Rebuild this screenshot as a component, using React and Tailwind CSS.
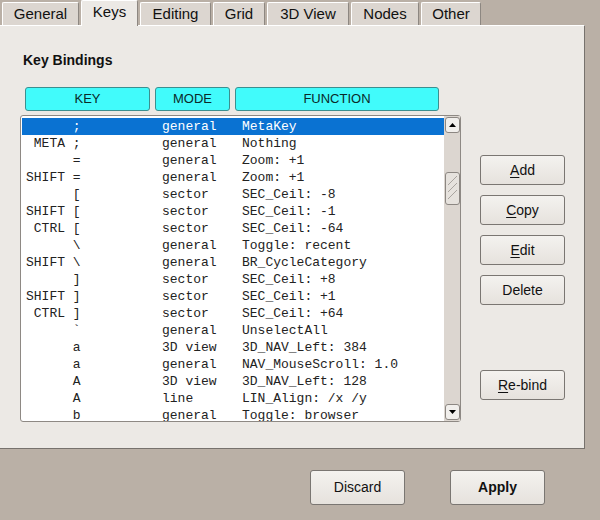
import React from 'react';

const tabs = [
  { label: 'General', w: 'w-[77px]' },
  { label: 'Keys', w: 'w-[57px]', active: true },
  { label: 'Editing', w: 'w-[71px]' },
  { label: 'Grid', w: 'w-[52px]' },
  { label: '3D View', w: 'w-[82px]' },
  { label: 'Nodes', w: 'w-[68px]' },
  { label: 'Other', w: 'w-[60px]' },
];

const rows = [
  ['      ;', 'general', 'MetaKey'],
  [' META ;', 'general', 'Nothing'],
  ['      =', 'general', 'Zoom: +1'],
  ['SHIFT =', 'general', 'Zoom: +1'],
  ['      [', 'sector', 'SEC_Ceil: -8'],
  ['SHIFT [', 'sector', 'SEC_Ceil: -1'],
  [' CTRL [', 'sector', 'SEC_Ceil: -64'],
  ['      \\', 'general', 'Toggle: recent'],
  ['SHIFT \\', 'general', 'BR_CycleCategory'],
  ['      ]', 'sector', 'SEC_Ceil: +8'],
  ['SHIFT ]', 'sector', 'SEC_Ceil: +1'],
  [' CTRL ]', 'sector', 'SEC_Ceil: +64'],
  ['      `', 'general', 'UnselectAll'],
  ['      a', '3D view', '3D_NAV_Left: 384'],
  ['      a', 'general', 'NAV_MouseScroll: 1.0'],
  ['      A', '3D view', '3D_NAV_Left: 128'],
  ['      A', 'line', 'LIN_Align: /x /y'],
  ['      b', 'general', 'Toggle: browser'],
];

const sans = "font-['Liberation_Sans',Arial,sans-serif]";

function Btn({ children, className = '' }) {
  return (
    <button
      className={`flex items-center justify-center rounded-[3px] border border-[#7a7672] bg-gradient-to-b from-[#f4f2ef] to-[#e6e2dd] text-[14px] text-[#111] ${className}`}
    >
      {children}
    </button>
  );
}

function Ul({ c, rest }) {
  return (
    <span>
      <span className="underline underline-offset-2">{c}</span>
      {rest}
    </span>
  );
}

function ScrollBtn({ up }) {
  return (
    <div className="flex h-[16px] w-[15px] items-center justify-center rounded-[3px] border border-[#8c8782] bg-[#f1efec]">
      <svg width="7" height="4" viewBox="0 0 7 4">
        {up ? <path d="M0 4 L3.5 0 L7 4 Z" fill="#000" /> : <path d="M0 0 L3.5 4 L7 0 Z" fill="#000" />}
      </svg>
    </div>
  );
}

export default function App() {
  return (
    <div className={`flex h-[520px] w-[600px] flex-col bg-[#bab0a6] ${sans}`}>
      <div className="flex h-[25px] items-end gap-[2px] pl-[2px]">
        {tabs.map(t => (
          <div
            key={t.label}
            className={`${t.w} flex items-center justify-center rounded-t-[2px] border-l border-t border-r border-l-white border-t-white border-r-[#8d8781] text-[15px] text-[#111] ${
              t.active ? 'relative z-10 -mb-[1px] h-[26px] bg-[#ece9e5] pb-[2px]' : 'h-[23px] bg-[#dcd6d0]'
            }`}
          >
            {t.label}
          </div>
        ))}
      </div>

      <div className="flex h-[424px] w-[585px] flex-col border-r border-b border-r-[#77726d] border-b-[#77726d] border-t border-t-white bg-[#ece9e5]">
        <div className="pl-[23px] pt-[24px] text-[14px] font-bold text-[#111]">Key Bindings</div>

        <div className="mt-[16px] flex">
          <div className="ml-[20px] flex w-[441px] flex-col">
            <div className="ml-[5px] flex h-[24px] gap-[5px]">
              {[['KEY', 'w-[125px]'], ['MODE', 'w-[75px]'], ['FUNCTION', 'w-[204px]']].map(([l, w]) => (
                <div
                  key={l}
                  className={`${w} flex items-center justify-center rounded-[3px] border border-[#3b8f8f] bg-[#41fbfb] text-[13px] text-[#0a2a2a]`}
                >
                  {l}
                </div>
              ))}
            </div>

            <div className="mt-[4px] flex h-[307px] rounded-[3px] border border-[#8e8984] bg-white">
              <div className="flex-1 overflow-hidden pt-[2px] pl-[1px] font-['Liberation_Mono','Courier_New',monospace] text-[13px] text-[#222]">
                {rows.map((r, i) => (
                  <div
                    key={i}
                    className={`flex h-[17px] items-center whitespace-pre ${i === 0 ? 'bg-[#0a72d2] text-white' : ''}`}
                  >
                    <span className="w-[140px] pl-[4px]">{r[0]}</span>
                    <span className="w-[80px]">{r[1]}</span>
                    <span>{r[2]}</span>
                  </div>
                ))}
              </div>
              <div className="flex w-[16px] flex-col items-center justify-between bg-[#dcd6d0] py-[1px]">
                <div className="flex flex-col items-center">
                  <ScrollBtn up />
                  <div className="mt-[39px] flex h-[33px] w-[15px] items-center justify-center rounded-[3px] border border-[#8c8782] bg-[#e6e2dd]">
                    <svg width="11" height="27" viewBox="0 0 11 27">
                      <path d="M1 10 L10 1 M1 17 L10 8 M1 24 L10 15" stroke="#a9a49f" strokeWidth="1" />
                    </svg>
                  </div>
                </div>
                <ScrollBtn />
              </div>
            </div>
          </div>

          <div className="ml-[19px] flex w-[85px] flex-col pt-[68px]">
            <Btn className="h-[30px]"><Ul c="A" rest="dd" /></Btn>
            <Btn className="mt-[10px] h-[30px]"><Ul c="C" rest="opy" /></Btn>
            <Btn className="mt-[10px] h-[30px]"><Ul c="E" rest="dit" /></Btn>
            <Btn className="mt-[10px] h-[30px]">Delete</Btn>
            <Btn className="mt-[65px] h-[30px]"><Ul c="R" rest="e-bind" /></Btn>
          </div>
        </div>
      </div>

      <div className="flex pt-[21px]">
        <Btn className="ml-[310px] h-[35px] w-[95px]">Discard</Btn>
        <Btn className="ml-[45px] h-[35px] w-[95px] font-bold">Apply</Btn>
      </div>
    </div>
  );
}
